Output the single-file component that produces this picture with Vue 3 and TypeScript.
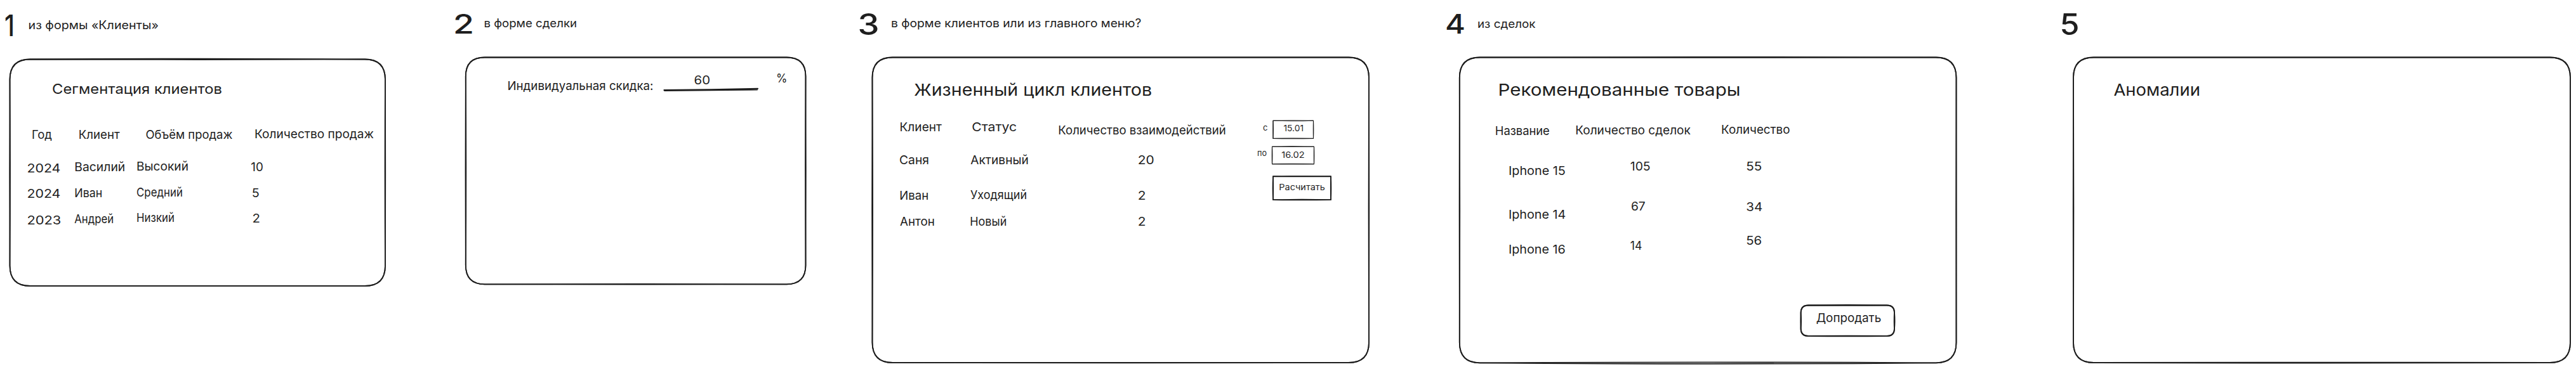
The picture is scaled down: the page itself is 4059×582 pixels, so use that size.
<script setup lang="ts">
interface Label {
  text: string
  x: number
  y: number
  w: number
  size?: number
}

interface Box {
  x1: number
  y1: number
  x2: number
  y2: number
  r: number
  stroke: number
  bow: [number, number, number, number]
}

interface Board {
  id: number
  left: number
  width: number
  digit: Label
  boxes: Box[]
  labels: Label[]
  underline?: string
}

const ROW = 19
const TITLE = 26
const SMALL = 13.5

const boards: Board[] = [
  {
    id: 1,
    left: 0,
    width: 680,
    digit: { text: '1', x: 7, y: 56.5, w: 16, size: 46 },
    boxes: [{ x1: 15.5, y1: 93.5, x2: 607, y2: 451, r: 32, stroke: 1.8, bow: [-1.6, -0.8, 0.3, 1] }],
    labels: [
      { text: 'из формы «Клиенты»', x: 44.5, y: 45.7, w: 205.5, size: 18 },
      { text: 'Сегментация клиентов', x: 82, y: 147.7, w: 268, size: 22 },
      { text: 'Год', x: 50, y: 218.5, w: 32 },
      { text: 'Клиент', x: 123.7, y: 219, w: 65 },
      { text: 'Объём продаж', x: 229.4, y: 218.5, w: 137 },
      { text: 'Количество продаж', x: 401, y: 218, w: 188 },
      { text: '2024', x: 42.4, y: 271.7, w: 53 },
      { text: 'Василий', x: 117.3, y: 270, w: 80 },
      { text: 'Высокий', x: 215, y: 269, w: 82 },
      { text: '10', x: 395.3, y: 270.3, w: 19.5 },
      { text: '2024', x: 42.4, y: 312.3, w: 53 },
      { text: 'Иван', x: 117.3, y: 310.7, w: 44 },
      { text: 'Средний', x: 215, y: 309.5, w: 73 },
      { text: '5', x: 396.8, y: 311, w: 12 },
      { text: '2023', x: 42.4, y: 354, w: 54 },
      { text: 'Андрей', x: 117.3, y: 352, w: 62 },
      { text: 'Низкий', x: 215, y: 350.3, w: 60 },
      { text: '2', x: 397.5, y: 351, w: 12.5 }
    ]
  },
  {
    id: 2,
    left: 680,
    width: 640,
    digit: { text: '2', x: 714, y: 52.5, w: 33, size: 43 },
    boxes: [{ x1: 733.8, y1: 90.5, x2: 1269.5, y2: 448.3, r: 30, stroke: 1.8, bow: [0, -1, -1, 1] }],
    underline: 'M1046.5 142.2 Q1120 141.6 1194 139.8 M1047 142.8 Q1110 142.4 1193 141.4',
    labels: [
      { text: 'в форме сделки', x: 762.4, y: 43.3, w: 146.6, size: 18 },
      { text: 'Индивидуальная скидка:', x: 799.5, y: 142.3, w: 230 },
      { text: '60', x: 1093.5, y: 133, w: 25.5 },
      { text: '%', x: 1223, y: 129.5, w: 17.5 }
    ]
  },
  {
    id: 3,
    left: 1320,
    width: 920,
    digit: { text: '3', x: 1351.5, y: 54.5, w: 34, size: 46 },
    boxes: [
      { x1: 1374.5, y1: 90.5, x2: 2157, y2: 572, r: 32, stroke: 1.8, bow: [0, -0.8, 0.6, 1.2] },
      { x1: 2006, y1: 190.3, x2: 2069.5, y2: 218.4, r: 0, stroke: 1.1, bow: [1, 0.6, 0.8, 0.8] },
      { x1: 2004.5, y1: 231.2, x2: 2070.5, y2: 258.6, r: 0, stroke: 1.1, bow: [-0.8, 0.6, -0.8, 0.8] },
      { x1: 2006, y1: 278.2, x2: 2097, y2: 315.2, r: 0, stroke: 1.7, bow: [-0.8, 0.8, -1, -0.9] }
    ],
    labels: [
      { text: 'в форме клиентов или из главного меню?', x: 1404, y: 43.3, w: 394.3, size: 18 },
      { text: 'Жизненный цикл клиентов', x: 1440.2, y: 150.9, w: 375, size: TITLE },
      { text: 'Клиент', x: 1417.5, y: 206.7, w: 66.5 },
      { text: 'Статус', x: 1531.2, y: 206.7, w: 71 },
      { text: 'Количество взаимодействий', x: 1667.3, y: 212, w: 264.5 },
      { text: 'Саня', x: 1417, y: 258.7, w: 47 },
      { text: 'Активный', x: 1529.3, y: 258.7, w: 91.5 },
      { text: '20', x: 1792.8, y: 259.3, w: 26 },
      { text: 'Иван', x: 1417.3, y: 314.7, w: 46 },
      { text: 'Уходящий', x: 1529, y: 314, w: 89 },
      { text: '2', x: 1792.8, y: 314.7, w: 12.8 },
      { text: 'Антон', x: 1418, y: 355.7, w: 55 },
      { text: 'Новый', x: 1528.3, y: 355.7, w: 58 },
      { text: '2', x: 1792.8, y: 355.7, w: 12.8 },
      { text: 'с', x: 1990, y: 205.8, w: 7.5, size: SMALL },
      { text: '15.01', x: 2022.5, y: 207.3, w: 31.5, size: SMALL },
      { text: 'по', x: 1981, y: 246, w: 15, size: SMALL },
      { text: '16.02', x: 2019.2, y: 249.3, w: 36.6, size: SMALL },
      { text: 'Расчитать', x: 2015.3, y: 300, w: 72.5, size: SMALL }
    ]
  },
  {
    id: 4,
    left: 2240,
    width: 960,
    digit: { text: '4', x: 2277, y: 52.5, w: 32, size: 43 },
    boxes: [
      { x1: 2299.8, y1: 90.5, x2: 3082.5, y2: 572.3, r: 32, stroke: 1.8, bow: [-1.4, -0.6, 3, 0.8] },
      { x1: 2837.6, y1: 481.5, x2: 2985, y2: 530, r: 12, stroke: 1.9, bow: [-1, 1, -0.8, 0.9] }
    ],
    labels: [
      { text: 'из сделок', x: 2328, y: 44, w: 91.5, size: 18 },
      { text: 'Рекомендованные товары', x: 2360.5, y: 150.9, w: 382, size: TITLE },
      { text: 'Название', x: 2355.8, y: 212.7, w: 86 },
      { text: 'Количество сделок', x: 2482.3, y: 212, w: 181.5 },
      { text: 'Количество', x: 2712, y: 211, w: 108.5 },
      { text: 'Iphone 15', x: 2377, y: 275.7, w: 89.8 },
      { text: '105', x: 2568.8, y: 268.7, w: 31.8 },
      { text: '55', x: 2751.2, y: 269, w: 25 },
      { text: 'Iphone 14', x: 2377, y: 344.7, w: 90.3 },
      { text: '67', x: 2570, y: 332, w: 22.7 },
      { text: '34', x: 2751.2, y: 332.7, w: 26 },
      { text: 'Iphone 16', x: 2377, y: 399.7, w: 89.8 },
      { text: '14', x: 2568.8, y: 394, w: 18.6 },
      { text: '56', x: 2751.2, y: 385.7, w: 25 },
      { text: 'Допродать', x: 2861.7, y: 507.7, w: 102.5 }
    ]
  },
  {
    id: 5,
    left: 3200,
    width: 859,
    digit: { text: '5', x: 3245.5, y: 54.5, w: 31, size: 46 },
    boxes: [{ x1: 3267, y1: 90.5, x2: 4050, y2: 572, r: 32, stroke: 1.8, bow: [0, -0.4, 1.4, 0.8] }],
    labels: [{ text: 'Аномалии', x: 3330.4, y: 151, w: 136.5, size: TITLE }]
  }
]

/* One pass of the pen around a box; bow bends top, right, bottom and left sides outwards or inwards. */
function outline(b: Box, k: number): string {
  const { x1, y1, x2, y2, r } = b
  const [t, e, s, w] = b.bow.map((v) => v * k)
  const mx = (x1 + x2) / 2
  const my = (y1 + y2) / 2
  return [
    `M${x1 + r} ${y1}`,
    `Q${mx} ${y1 + t} ${x2 - r} ${y1}`,
    `Q${x2} ${y1} ${x2} ${y1 + r}`,
    `Q${x2 + e} ${my} ${x2} ${y2 - r}`,
    `Q${x2} ${y2} ${x2 - r} ${y2}`,
    `Q${mx} ${y2 + s} ${x1 + r} ${y2}`,
    `Q${x1} ${y2} ${x1} ${y2 - r}`,
    `Q${x1 + w} ${my} ${x1} ${y1 + r}`,
    `Q${x1} ${y1} ${x1 + r} ${y1}Z`
  ].join(' ')
}
</script>

<template>
  <main class="whiteboard">
    <section v-for="b in boards" :key="b.id" class="board">
      <svg :width="b.width" height="582" :viewBox="`${b.left} 0 ${b.width} 582`">
        <g v-for="(box, i) in b.boxes" :key="i" class="ink" :stroke-width="box.stroke">
          <path :d="outline(box, 1)" />
          <path :d="outline(box, -0.6)" />
        </g>
        <path v-if="b.underline" class="ink" :d="b.underline" stroke-width="2.2" />
        <text
          class="digit"
          :x="b.digit.x"
          :y="b.digit.y"
          :font-size="b.digit.size"
          :textLength="b.digit.w"
          lengthAdjust="spacingAndGlyphs"
        >{{ b.digit.text }}</text>
        <text
          v-for="(l, i) in b.labels"
          :key="`l${i}`"
          :x="l.x"
          :y="l.y"
          :font-size="l.size ?? ROW"
          :textLength="l.w"
          lengthAdjust="spacingAndGlyphs"
        >{{ l.text }}</text>
      </svg>
    </section>
  </main>
</template>

<style>
body {
  margin: 0;
  background: #fff;
}
</style>

<style scoped>
.whiteboard {
  display: flex;
  width: 4059px;
  height: 582px;
  overflow: hidden;
  background: #fff;
}

.board {
  flex: none;
}

.board svg {
  display: block;
}

.ink {
  fill: none;
  stroke: #1e1e1e;
  stroke-linecap: round;
  stroke-linejoin: round;
}

text {
  fill: #1e1e1e;
  font-family: Inter, "Noto Sans", sans-serif;
  font-weight: 400;
}

.digit {
  font-weight: 500;
}
</style>
